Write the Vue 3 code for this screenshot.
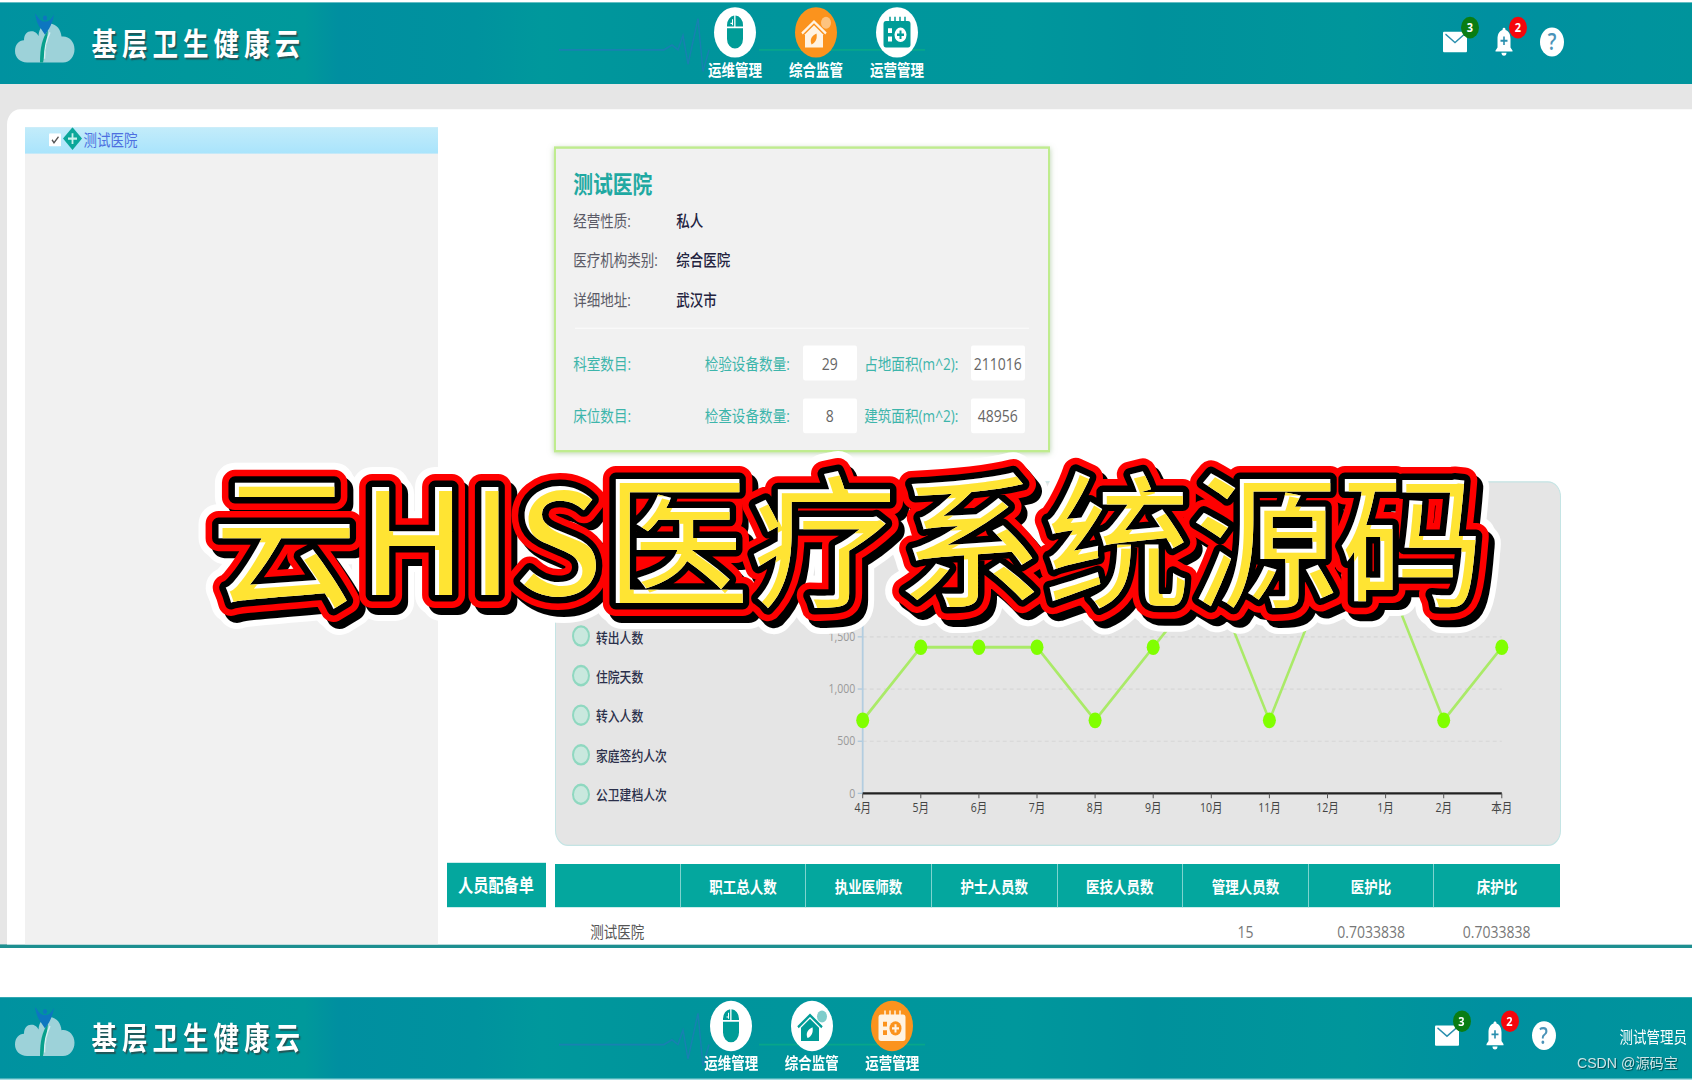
<template>
  <div class="page">
    <div class="sheet">
      <section v-for="screen in screens" :key="screen.id" :class="['screen', screen.id]">
        <header class="topbar">
          <svg class="pulse" width="400" height="68" viewBox="0 0 400 68">
            <path d="M0 39.5h105l8-4 6 4 5-12 5 24 10-38 5 44 6-18" fill="none" stroke="#2f6cc8" stroke-opacity=".5" stroke-width="1.4" />
            <path d="M200 39.5h166" fill="none" stroke="#0bb37e" stroke-opacity=".6" stroke-width="1.4" />
          </svg>
          <div class="brand">
            <svg class="logo" width="60" height="42" viewBox="0 0 60 42">
              <path d="M12 41C5 41 0 37 0 31.500C0 26 4 22.500 9 22.500C9 17 13 14.500 17 15C20 15 22.500 17 23.500 19C24 12 29 8 35 8.500C42 9 46 14 46.500 19.500C53 18.500 59.500 23 59.500 30C59.500 36 55 41 48 41Z" fill="#9dd2d9" />
              <path d="M25 41c0-12 2-20 8-27-1 10-3 19-5 27z" fill="#08a08c" />
              <path d="M29.500 38c0-10 2.500-17 5.500-22" fill="none" stroke="#d5eef0" stroke-width="1.400" />
              <path d="M20 0c4 5 6 7 10 7 4 0 6-2 9-6-1 5-3 9-5 12l-4 5-4-5c-3-3-5-7-6-13z" fill="#0d76c0" />
              <circle cx="30" cy="4" r="2" fill="#0d76c0" />
            </svg>
            <span class="brand-name">基层卫生健康云</span>
          </div>
          <nav class="nav">
            <div v-for="item in navItems" :key="item.key" :class="['nav-item', { active: item.key === screen.active }]">
              <span class="nav-icon">
                <svg v-if="item.key === 'ops'" width="42" height="42" viewBox="0 0 42 42">
                  <path d="M13 17.500h16v9a8 8 0 0 1-16 0zM13 16v-1a8 8 0 0 1 7.200-8v9zM21.500 7A8 8 0 0 1 29 15v1h-7.500z" fill="currentColor" />
                  <path d="M18.500 10v5M16.500 13.500h2" stroke="#fff" stroke-width="1" />
                </svg>
                <svg v-else-if="item.key === 'watch'" width="42" height="42" viewBox="0 0 42 42">
                  <circle cx="31" cy="13" r="5" fill="currentColor" opacity=".5" />
                  <path d="M7 22 19 12l12 10" fill="none" stroke="currentColor" stroke-width="2.200" />
                  <path d="M10 22.500 19 15l9 7.500V33.500H10z" fill="currentColor" />
                  <path class="leaf" d="M21.500 22c1 4-1 8-5 9-2-4 0-7 5-9z" />
                </svg>
                <svg v-else width="42" height="42" viewBox="0 0 42 42">
                  <path d="M14 8v5M19 8v5M24 8v5M29 8v5" stroke="currentColor" stroke-width="1.500" />
                  <rect x="7.500" y="11.500" width="27" height="22" rx="2.500" fill="currentColor" />
                  <path class="cut" d="M12 17.500h4v4h-4zM12 24.500h4v4h-4z" />
                  <circle class="cut" cx="24.500" cy="23" r="6" />
                  <path d="M24.500 19.500v7M21 23h7" stroke="currentColor" stroke-width="2" />
                </svg>
              </span>
              <span class="nav-label">{{ item.label }}</span>
            </div>
          </nav>
          <div class="tools">
            <div class="tool">
              <svg width="24" height="24" viewBox="0 0 24 24">
                <rect x="0" y="3.500" width="24" height="17" rx="1" fill="#fff" />
                <path d="M2.500 5.500 12 12.500l9.500-7" fill="none" stroke="#2a8fae" stroke-width="1.300" />
              </svg>
              <span class="badge green">3</span>
            </div>
            <div class="tool bell">
              <svg width="18" height="24" viewBox="0 0 18 24">
                <path d="M9 0c1 0 1.500.8 1.500 2C14 3 15.500 6 15.500 9.500v7L17.500 19v1H.5v-1l2-2.500v-7C2.500 6 4 3 7.500 2 7.500.8 8 0 9 0z" fill="#fff" />
                <path d="M6.500 21h5a2.500 2.500 0 0 1-5 0z" fill="#fff" />
                <path d="M9 7.500v7M5.500 11h7" stroke="#2a8fae" stroke-width="1.600" />
              </svg>
              <span class="badge red">2</span>
            </div>
            <div class="tool help">?</div>
          </div>
          <span v-if="screen.user" class="user">{{ screen.user }}</span>
        </header>

        <main v-if="screen.id === 'supervise'" class="body">
          <div class="panel">
            <aside class="tree">
              <div class="tree-row">
                <svg width="12" height="11" viewBox="0 0 12 11">
                  <rect width="12" height="11" rx="1" fill="#fff" />
                  <path d="M3 5.500 5 8l4.500-5" fill="none" stroke="#555" stroke-width="1.300" />
                </svg>
                <svg class="diamond" width="19" height="19" viewBox="0 0 19 19">
                  <path d="M9.500 0 19 9.500 9.500 19 0 9.500z" fill="#0ba79a" />
                  <path d="M9.500 5v9M5 9.500h9" stroke="#c8f1ec" stroke-width="1.800" />
                </svg>
                <span>测试医院</span>
              </div>
            </aside>

            <div class="content">
              <div class="card">
                <h2>测试医院</h2>
                <div v-for="row in info" :key="row.label" class="info-row">
                  <span class="info-label">{{ row.label }}:</span>
                  <span class="info-value">{{ row.value }}</span>
                </div>
                <div class="divider"></div>
                <div v-for="row in stats" :key="row[0]" class="stat-row">
                  <span>{{ row[0] }}:</span>
                  <span>{{ row[1] }}:</span>
                  <span class="num">{{ row[2] }}</span>
                  <span>{{ row[3] }}:</span>
                  <span class="num">{{ row[4] }}</span>
                </div>
              </div>

              <div class="chart-panel">
                <div class="options">
                  <div v-for="name in options" :key="name" class="option">
                    <i class="radio"></i>{{ name }}
                  </div>
                </div>
                <svg class="chart" width="740" height="300" viewBox="0 0 740 300">
                  <g v-for="tick in yTicks" :key="tick">
                    <line v-if="tick" :x1="X0" :x2="xAt(11)" :y1="yAt(tick)" :y2="yAt(tick)" stroke="#d6d6d6" stroke-dasharray="4 3" />
                    <line :x1="X0 - 5" :x2="X0" :y1="yAt(tick)" :y2="yAt(tick)" stroke="#a9c6dc" />
                    <text :x="X0 - 7.5" :y="yAt(tick) + 3.5" text-anchor="end" fill="#999">{{ tick.toLocaleString('en-US') }}</text>
                  </g>
                  <line :x1="X0" :x2="X0" :y1="yAt(2500)" :y2="yAt(0)" stroke="#b3cde0" stroke-width="1.8" />
                  <line :x1="X0" :x2="xAt(11)" :y1="yAt(0)" :y2="yAt(0)" stroke="#222" stroke-width="1.8" />
                  <polyline :points="linePoints" fill="none" stroke="#aaea68" stroke-width="2.5" />
                  <g v-for="(m, i) in months" :key="m">
                    <line :x1="xAt(i)" :x2="xAt(i)" :y1="yAt(0)" :y2="yAt(0) + 4" stroke="#555" />
                    <circle :cx="xAt(i)" :cy="yAt(values[i])" r="6.5" fill="#80ff00" />
                    <text :x="xAt(i)" :y="yAt(0) + 15.5" text-anchor="middle" fill="#444">{{ m }}</text>
                  </g>
                </svg>
              </div>

              <div class="staff">
                <div class="staff-title">人员配备单</div>
                <table>
                  <thead>
                    <tr><th v-for="col in columns" :key="col">{{ col }}</th></tr>
                  </thead>
                  <tbody>
                    <tr><td v-for="(cell, i) in staffRow" :key="i">{{ cell }}</td></tr>
                  </tbody>
                </table>
              </div>
            </div>
          </div>
        </main>
      </section>
    </div>

    <!-- 标题叠加层：白边、黑影、红边、黑边、白底、黄字 -->
    <svg class="banner" width="1694" height="240" viewBox="0 0 1694 240">
      <defs>
        <text id="banner-title" x="211" y="174.500" class="banner-text">{{ title }}</text>
        <clipPath id="glyphs"><use href="#banner-title" /></clipPath>
      </defs>
      <use v-for="(layer, i) in layers" :key="i" href="#banner-title" :x="layer.dx" :y="layer.dy"
        :fill="layer.color" :stroke="layer.color" :stroke-width="layer.width" stroke-linejoin="round" />
      <g clip-path="url(#glyphs)">
        <use href="#banner-title" x="4" y="4" fill="#ffe433" />
      </g>
    </svg>

    <div class="watermark">CSDN @源码宝</div>
  </div>
</template>

<script setup>
import { computed } from 'vue'

const screens = [
  { id: 'supervise', active: 'watch', user: '' },
  { id: 'operate', active: 'run', user: '测试管理员' }
]

const navItems = [
  { key: 'ops', label: '运维管理' },
  { key: 'watch', label: '综合监管' },
  { key: 'run', label: '运营管理' }
]

const info = [
  { label: '经营性质', value: '私人' },
  { label: '医疗机构类别', value: '综合医院' },
  { label: '详细地址', value: '武汉市' }
]

const stats = [
  ['科室数目', '检验设备数量', 29, '占地面积(m^2)', 211016],
  ['床位数目', '检查设备数量', 8, '建筑面积(m^2)', 48956]
]

const options = ['转出人数', '住院天数', '转入人数', '家庭签约人次', '公卫建档人次']

const columns = ['', '职工总人数', '执业医师数', '护士人员数', '医技人员数', '管理人员数', '医护比', '床护比']
const staffRow = ['测试医院', '', '', '', '', '15', '0.7033838', '0.7033838']

// 折线图
const months = ['4月', '5月', '6月', '7月', '8月', '9月', '10月', '11月', '12月', '1月', '2月', '本月']
const values = [700, 1400, 1400, 1400, 700, 1400, 2100, 700, 2100, 2100, 700, 1400]
const yTicks = [0, 500, 1000, 1500]
const X0 = 47.7
const xAt = (i) => X0 + i * 58.1
const yAt = (v) => 259.2 - (v / 500) * 43.5
const linePoints = computed(() => values.map((v, i) => `${xAt(i)},${yAt(v)}`).join(' '))

const title = '云HIS医疗系统源码'
const layers = [
  { color: '#fff', width: 40, dx: 0, dy: 0 },
  { color: '#fff', width: 38, dx: 6, dy: 7 },
  { color: '#000', width: 26, dx: 6, dy: 7 },
  { color: '#fe0000', width: 26, dx: 0, dy: 0 },
  { color: '#000', width: 13, dx: 0, dy: 0 },
  { color: '#fff', width: 0, dx: 0, dy: 0 }
]
</script>

<style>
body {
  margin: 0;
  background: #fff;
}
</style>

<style scoped>
.page {
  position: relative;
  width: 1694px;
  height: 1080px;
  overflow: hidden;
  background: #fff;
  font-family: "Open Sans", "Noto Sans CJK SC", sans-serif;
}

/* 界面纵向拉伸 1.2 倍 */
.sheet {
  width: 1692px;
  height: 900px;
  padding-top: 1.6px;
  box-sizing: border-box;
  transform: scaleY(1.2);
  transform-origin: 0 0;
}

.topbar {
  position: relative;
  display: flex;
  height: 68px;
  box-sizing: border-box;
  color: #fff;
  background: linear-gradient(90deg, #0092a0 0, #00979c 11%, #00999b 18%, #008fa0 20%, #00929e 28%, #00989c 32%, #00949c 40%, #00979c 60%, #00919c 68%, #00969b 80%, #0090a0 88%, #00949c 100%);
}

.operate .topbar {
  height: 69px;
  margin-top: 41px;
  padding-bottom: 1px;
  border-bottom: 1.2px solid #a5dce2;
}

.pulse {
  position: absolute;
  left: 559px;
  top: 0;
}

.brand {
  display: flex;
  align-items: flex-start;
  flex: 0 0 694.5px;
  box-sizing: border-box;
  padding: 9.5px 0 0 15px;
}

.operate .brand {
  flex-basis: 691px;
  padding-top: 8.5px;
}

.brand-name {
  margin-left: 16.5px;
  margin-top: 6.5px;
  font-size: 25.5px;
  line-height: 36px;
  font-weight: 700;
  letter-spacing: 5px;
  text-shadow: 1.5px 1.5px 1px rgba(40, 70, 70, 0.8);
}

.nav {
  position: relative;
  display: flex;
}

.nav-item {
  display: flex;
  flex-direction: column;
  align-items: center;
  width: 81px;
  padding-top: 4.2px;
}

.operate .nav-item {
  width: 80.5px;
  padding-top: 3px;
}

.nav-icon {
  display: flex;
  width: 42px;
  height: 42px;
  border-radius: 50%;
  background: #fff;
  color: #009c97;
}

.nav-icon .cut,
.nav-icon .leaf {
  fill: #fff;
}

.active .nav-icon {
  background: #fb931d;
  color: #fff3e2;
}

.active .nav-icon .cut,
.active .nav-icon .leaf {
  fill: #fb931d;
}

.nav-label {
  font-size: 13.5px;
  line-height: 20px;
  font-weight: 600;
}

.tools {
  display: flex;
  align-items: center;
  gap: 27.5px;
  margin-left: auto;
  margin-right: 128px;
  padding-bottom: 1px;
}

.operate .tools {
  margin-right: 64px;
  padding-bottom: 2px;
}

.tool {
  position: relative;
  height: 24px;
}

.tool svg {
  display: block;
}

.help {
  width: 24px;
  border-radius: 50%;
  background: #fff;
  color: #4a93b8;
  text-align: center;
  font-size: 19px;
  line-height: 24px;
  font-weight: 600;
}

.badge {
  position: absolute;
  left: 18px;
  top: -9px;
  width: 18px;
  height: 18px;
  border-radius: 50%;
  text-align: center;
  font-size: 11px;
  line-height: 18px;
  font-weight: 700;
}

.bell .badge {
  left: 14.5px;
}

.green {
  background: #0a7d14;
}

.red {
  background: #f5060b;
}

.user {
  margin-right: 5px;
  line-height: 67px;
  font-size: 13.5px;
}

.body {
  display: flex;
  flex-direction: column;
  height: 720px;
  box-sizing: border-box;
  padding: 21.4px 0 0 7px;
  border-bottom: 3.3px solid #1d8f90;
  background: #e6e6e6;
}

.panel {
  display: flex;
  flex: 1;
  min-height: 0;
  overflow: hidden;
  padding: 15.3px 0 0 17.5px;
  border-top-left-radius: 13px;
  background: #fff;
}

.tree {
  flex: 0 0 413px;
  background: #f1f1f1;
}

.tree-row {
  display: flex;
  align-items: center;
  height: 22px;
  box-sizing: border-box;
  padding: 0 0 1.6px 24.5px;
  background: linear-gradient(#c3ecfa, #a9e4fc);
  color: #4d6fe0;
  font-size: 13.5px;
}

.diamond {
  margin: -2px 1.5px 0 2px;
}

.content {
  flex: 1;
  padding: 15.4px 0 0 9px;
}

.card {
  width: 496px;
  height: 255.5px;
  box-sizing: border-box;
  margin-left: 107.7px;
  padding: 16.8px 17px 0;
  border: 2px solid #bfec8e;
  background: #f1f1f1;
  box-shadow: 0 1px 5px rgba(110, 160, 90, 0.5);
}

.card h2 {
  margin: 0;
  color: #1fa9a2;
  font-size: 19.8px;
  line-height: 27.5px;
  font-weight: 700;
}

.info-row {
  display: flex;
  height: 32.9px;
  line-height: 32.9px;
  font-size: 13.5px;
}

.info-label {
  width: 103px;
  color: #5a5a66;
}

.info-value {
  color: #23233f;
  font-weight: 500;
}

.divider {
  height: 1.5px;
  margin: 6.2px 2px 6px 2px;
  background: #fafafa;
}

.stat-row {
  display: grid;
  grid-template-columns: 131.5px 98px 61.5px 106.5px 54px;
  align-items: center;
  height: 44px;
  color: #3db5ab;
  font-size: 13.6px;
  white-space: nowrap;
}

.num {
  width: 54px;
  height: 29px;
  border-radius: 2px;
  background: #fff;
  color: #666;
  text-align: center;
  font-size: 14px;
  line-height: 29px;
}

.chart-panel {
  display: flex;
  width: 1006px;
  height: 303.7px;
  box-sizing: border-box;
  margin: 24px 0 0 108px;
  border: 1.5px solid #c4e4e4;
  border-radius: 13px;
  background: #e5e5e5;
}

.options {
  display: flex;
  flex-direction: column;
  justify-content: flex-end;
  flex: 0 0 259px;
  box-sizing: border-box;
  padding: 0 0 25.8px 16px;
}

.option {
  display: flex;
  align-items: center;
  height: 32.9px;
  color: #2a2f4a;
  font-size: 11.8px;
  font-weight: 500;
}

.radio {
  width: 18px;
  height: 18px;
  box-sizing: border-box;
  margin-right: 6.5px;
  border: 2px solid #8fd8c0;
  border-radius: 50%;
  background: #c9e8de;
}

.chart text {
  font-size: 10.5px;
}

.staff {
  display: flex;
  align-items: flex-start;
  margin-top: 14.2px;
}

.staff-title {
  width: 99px;
  margin-right: 9px;
  background: #04a79e;
  color: #fff;
  text-align: center;
  font-size: 15.2px;
  line-height: 36.7px;
  font-weight: 700;
}

table {
  width: 1005px;
  margin-top: 0.6px;
  border-collapse: collapse;
  table-layout: fixed;
}

th {
  height: 36.7px;
  padding: 0;
  background: #04a79e;
  color: #fff;
  font-size: 13.5px;
  font-weight: 700;
}

th + th {
  border-left: 1px solid #7fd3ce;
}

td {
  height: 38.5px;
  padding: 0;
  color: #777;
  text-align: center;
  font-size: 14px;
}

td:first-child {
  padding-bottom: 1px;
  color: #555;
  font-size: 13.5px;
}

.banner {
  position: absolute;
  left: 0;
  top: 420px;
}

.banner-text {
  font-family: "Noto Sans CJK SC", sans-serif;
  font-size: 146px;
  font-weight: 500;
  letter-spacing: 1px;
}

.watermark {
  position: absolute;
  right: 16px;
  bottom: 6px;
  color: rgba(255, 255, 255, 0.8);
  font-family: "Liberation Sans", "Noto Sans CJK SC", sans-serif;
  font-size: 14.2px;
  line-height: 22px;
  text-shadow: 1px 1px 1px rgba(0, 0, 0, 0.5);
}
</style>
